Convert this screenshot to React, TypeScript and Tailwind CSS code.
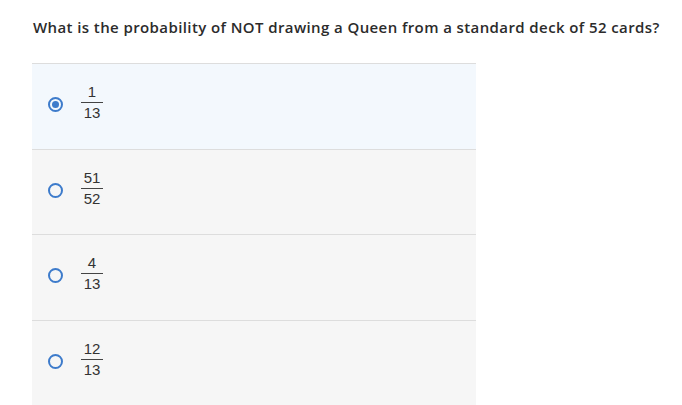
const options = [
  { num: "1", den: "13", selected: true },
  { num: "51", den: "52", selected: false },
  { num: "4", den: "13", selected: false },
  { num: "12", den: "13", selected: false },
];

function Radio({ selected }: { selected: boolean }) {
  return (
    <span className="flex h-[15px] w-[15px] shrink-0 items-center justify-center rounded-full border-2 border-[#3d7bcb]">
      {selected && <span className="h-[7px] w-[7px] rounded-full bg-[#3d7bcb]" />}
    </span>
  );
}

export default function App() {
  return (
    <div className="min-h-[405px] bg-white pl-[33px] pt-[17px]">
      <h1
        className="text-[15px] font-semibold leading-[20px] tracking-[0.4px] text-[#2b2b2b]"
        style={{ fontFamily: "'Open Sans', 'Liberation Sans', sans-serif" }}
      >
        What is the probability of NOT drawing a Queen from a standard deck of 52 cards?
      </h1>

      <div className="mt-[26px] w-[444px] -ml-px">
        {options.map((o, i) => (
          <div
            key={i}
            className={`flex h-[85.5px] items-center gap-[18px] border-t border-[#dddddd] pb-[3px] pl-[16px] ${o.selected ? "bg-[#f3f8fd]" : "bg-[#f6f6f6]"}`}
          >
            <Radio selected={o.selected} />
            <div
              className="mb-[5px] flex w-[22px] flex-col items-center text-[15px] leading-[17px] text-[#333]"
              style={{ fontFamily: "'Liberation Sans', Arial, sans-serif" }}
            >
              <span className="pb-[2px]">{o.num}</span>
              <span className="w-full border-t border-[#444] pt-[1px] text-center">{o.den}</span>
            </div>
          </div>
        ))}
      </div>
    </div>
  );
}
